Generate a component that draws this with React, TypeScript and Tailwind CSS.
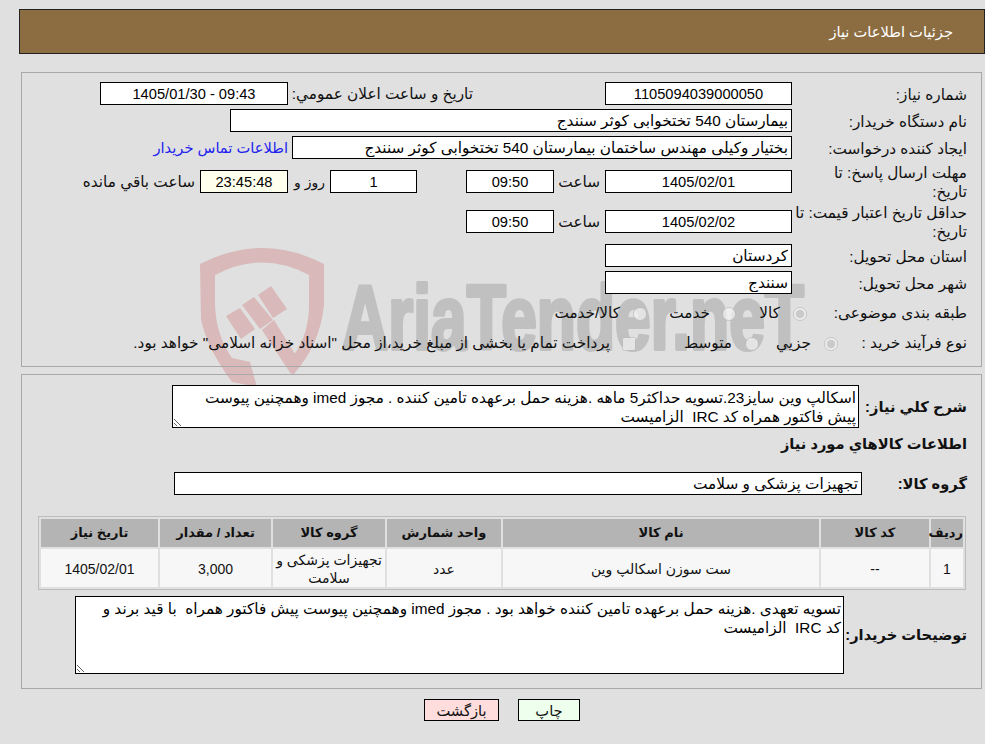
import type { ReactNode } from "react";

const box = "h-full border border-black bg-white px-[3px] text-black outline-none";

function Field({ value, className = "" }: { value: string; className?: string }) {
  return <input readOnly value={value} className={`${box} ${className}`} />;
}

function Row({ label, className = "", children }: { label: string; className?: string; children?: ReactNode }) {
  const twoLines = label.includes("\n");
  return (
    <div className={`flex items-center ${className}`}>
      <div className={`w-[175px] shrink-0 whitespace-pre-line leading-[19px] ${twoLines ? "" : "pt-[2px]"}`}>{label}</div>
      {children}
    </div>
  );
}

function Watermark() {
  return (
    <svg className="absolute left-0 top-0 z-0 [direction:ltr]" width="985" height="744" viewBox="0 0 985 744">
      <path
        fill="#d9b9b9"
        d="M200 264Q262 232 324 264L324 305Q320 345 293 375L282 360L293 356Q309 335 309 305L309 275Q262 250 215 275L215 305Q216 335 232 358L250 362L257 387L232 382Q208 350 201 320Z"
      />
      <path fill="#d9b9b9" d="M226 316L240 308L255 329L241 339Z" />
      <path fill="#d9b9b9" d="M242 305L254 297L273 320L260 329Z" />
      <path fill="#d9b9b9" d="M258 295L271 286L287 309L273 318Z" />
      <path fill="#d9b9b9" d="M262 330L274 320L300 362L291 374Z" />
      <text
        x="342"
        y="349"
        direction="ltr"
        fontFamily="Liberation Sans, sans-serif"
        fontWeight="700"
        fontSize="90"
        fill="#c0c0c0"
        stroke="#c0c0c0"
        strokeWidth="4"
        strokeLinejoin="round"
        textLength="462"
        lengthAdjust="spacingAndGlyphs"
      >
        AriaTender.neT
      </text>
    </svg>
  );
}

const headers = [
  ["ردیف", "w-[32px]"],
  ["کد کالا", "w-[108px]"],
  ["نام کالا", "w-[316px]"],
  ["واحد شمارش", "w-[114px]"],
  ["گروه کالا", "w-[112px]"],
  ["تعداد / مقدار", "w-[111px]"],
  ["تاریخ نیاز", "w-[117px]"],
];

const cells = ["1", "--", "ست سوزن اسکالپ وین", "عدد", "تجهیزات پزشکی و سلامت", "3,000", "1405/02/01"];

export default function App() {
  return (
    <div
      dir="rtl"
      className="relative h-[744px] w-full overflow-hidden bg-[#e0e0e0] pt-[9px] text-[15.3px] text-[#111] [font-family:'Liberation_Sans','DejaVu_Sans',sans-serif]"
    >
      <Watermark />

      <div className="relative z-10 me-[19px] flex h-[45px] items-center border border-[#222] bg-[#8c6d42] ps-[31px] text-[14.67px] text-white">
        جزئیات اطلاعات نیاز
      </div>

      <div className="relative z-10 me-[21px] ms-[3px] mt-[18px] h-[295px] border border-[#a8a8a8] ps-[14px] pt-[9px]">
        <Row label="شماره نیاز:" className="h-[23px]">
          <Field value="1105094039000050" className="w-[187px] text-center text-[14.67px]" />
          <div className="ms-[132px] w-[185px] pt-[2px]">تاریخ و ساعت اعلان عمومي:</div>
          <Field value="09:43 - 1405/01/30" className="w-[188px] text-center text-[14.67px]" />
        </Row>
        <Row label="نام دستگاه خریدار:" className="mt-[4px] h-[23px]">
          <Field value="بیمارستان 540 تختخوابی کوثر سنندج" className="w-[562px] text-[15.3px]" />
        </Row>
        <Row label="ایجاد کننده درخواست:" className="mt-[4px] h-[23px]">
          <Field value="بختیار وکیلی مهندس ساختمان بیمارستان 540 تختخوابی کوثر سنندج" className="w-[500px] text-[15.3px]" />
          <a className="ms-[4px] text-[14.67px] text-[#2222ee]">اطلاعات تماس خریدار</a>
        </Row>
        <Row label={"مهلت ارسال پاسخ: تا\nتاریخ:"} className="mt-[11px] h-[23px]">
          <Field value="1405/02/01" className="w-[187px] text-center text-[14.67px]" />
          <div className="w-[51px] ps-[5px] pt-[2px]">ساعت</div>
          <Field value="09:50" className="w-[88px] text-center text-[14.67px]" />
          <div className="w-[49px]" />
          <Field value="1" className="w-[87px] text-center text-[14.67px]" />
          <div className="w-[42px] ps-[5px] pt-[2px] text-[14px]">روز و</div>
          <Field value="23:45:48" className="w-[88px] !bg-[#ffffee] text-center text-[14.67px]" />
          <div className="ms-[5px] pt-[2px]">ساعت باقي مانده</div>
        </Row>
        <Row label={"حداقل تاریخ اعتبار قیمت: تا\nتاریخ:"} className="mt-[17px] h-[23px]">
          <Field value="1405/02/02" className="w-[187px] text-center text-[14.67px]" />
          <div className="w-[51px] ps-[5px] pt-[2px]">ساعت</div>
          <Field value="09:50" className="w-[88px] text-center text-[14.67px]" />
        </Row>
        <Row label="استان محل تحویل:" className="mt-[11px] h-[23px]">
          <Field value="کردستان" className="w-[187px] text-[15.3px]" />
        </Row>
        <Row label="شهر محل تحویل:" className="mt-[4px] h-[23px]">
          <Field value="سنندج" className="w-[187px] text-[15.3px]" />
        </Row>
        <div className="mt-[8px] flex h-[23px] items-center">
          <div className="w-[160px] shrink-0">طبقه بندی موضوعی:</div>
          <input type="radio" disabled defaultChecked name="cat" className="m-0 size-[14px] shrink-0" />
          <div className="w-[57px] ps-[13px]">کالا</div>
          <input type="radio" disabled name="cat" className="m-0 size-[14px] shrink-0" />
          <div className="w-[75px] ps-[12px]">خدمت</div>
          <input type="radio" disabled name="cat" className="m-0 size-[14px] shrink-0" />
          <div className="ps-[13px]">کالا/خدمت</div>
        </div>
        <div className="mt-[7px] flex h-[23px] items-center">
          <div className="w-[129px] shrink-0">نوع فرآیند خرید :</div>
          <input type="radio" disabled defaultChecked name="kind" className="m-0 size-[14px] shrink-0" />
          <div className="w-[65px] ps-[13px]">جزيي</div>
          <input type="radio" disabled name="kind" className="m-0 size-[14px] shrink-0" />
          <div className="w-[109px] ps-[13px]">متوسط</div>
          <input type="checkbox" disabled className="m-0 size-[14px] shrink-0" />
          <div className="ps-[12px]">پرداخت تمام یا بخشی از مبلغ خرید،از محل "اسناد خزانه اسلامی" خواهد بود.</div>
        </div>
      </div>

      <div className="relative z-10 me-[21px] ms-[3px] mt-[7px] h-[315px] border border-[#a8a8a8] ps-[14px] pt-[10px] text-[14.67px] font-bold">
        <div className="flex h-[43px] items-center">
          <div className="w-[108px] shrink-0">شرح کلي نیاز:</div>
          <textarea
            readOnly
            className="h-[43px] w-[687px] border border-black bg-white px-[2px] pt-[2px] text-[15.3px] font-normal leading-[19px] text-black outline-none"
            value={"اسکالپ وین سایز23.تسویه حداکثر5 ماهه .هزینه حمل برعهده تامین کننده . مجوز imed وهمچنین پیوست\nپیش فاکتور همراه کد IRC  الزامیست"}
          />
        </div>
        <div className="mt-[4px] h-[24px] leading-[24px]">اطلاعات کالاهاي مورد نیاز</div>
        <div className="mt-[16px] flex h-[23px] items-center">
          <div className="w-[105px] shrink-0">گروه کالا:</div>
          <Field value="تجهیزات پزشکی و سلامت" className="w-[688px] text-[15.3px] font-normal" />
        </div>
        <table className="ms-[1px] mt-[21px] w-[928px] table-fixed border-separate border-spacing-[2px] border border-[#bcbcbc] text-center">
          <thead>
            <tr>
              {headers.map(([title, width]) => (
                <th key={title} className={`${width} h-[28px] bg-[#b4b4b4] p-0 text-[13px] font-bold`}>
                  {title}
                </th>
              ))}
            </tr>
          </thead>
          <tbody>
            <tr>
              {cells.map((c) => (
                <td key={c} className="h-[37px] bg-[#f7f7f7] p-0 pt-[2px] text-[14px] font-normal leading-[18px]">
                  {c}
                </td>
              ))}
            </tr>
          </tbody>
        </table>
        <div className="mt-[6px] flex h-[78px] items-center">
          <div className="w-[123px] shrink-0 whitespace-nowrap">توضیحات خریدار:</div>
          <textarea
            readOnly
            className="h-[78px] w-[769px] border border-black bg-white px-[2px] pt-[2px] text-[15.3px] font-normal leading-[19px] text-black outline-none"
            value={"تسویه تعهدی .هزینه حمل برعهده تامین کننده خواهد بود . مجوز imed وهمچنین پیوست پیش فاکتور همراه  با قید برند و\nکد IRC  الزامیست"}
          />
        </div>
      </div>

      <div className="relative z-10 mt-[10px] flex h-[22px] justify-center gap-[19px] pe-[19px]">
        <button className="h-full w-[62px] border border-black bg-[#eeffee] text-[14.67px]">چاپ</button>
        <button className="h-full w-[75px] border border-black bg-[#ffdddd] text-[14.67px]">بازگشت</button>
      </div>
    </div>
  );
}
